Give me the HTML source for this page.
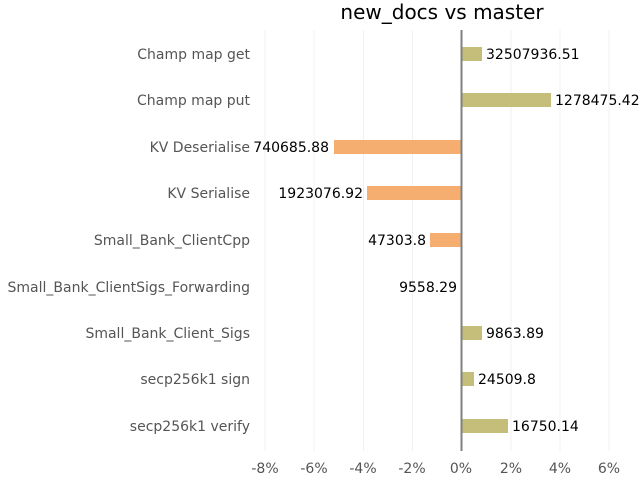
<html><body style="margin:0;background:#fff">
<svg width="640" height="480" xmlns="http://www.w3.org/2000/svg" font-family="DejaVu Sans, sans-serif">
<g stroke="#f0f0f0" stroke-width="1">
<line x1="265" y1="30" x2="265" y2="451"/><line x1="314" y1="30" x2="314" y2="451"/><line x1="363.5" y1="30" x2="363.5" y2="451"/><line x1="412.5" y1="30" x2="412.5" y2="451"/><line x1="511" y1="30" x2="511" y2="451"/><line x1="560" y1="30" x2="560" y2="451"/><line x1="609" y1="30" x2="609" y2="451"/>
</g>
<g fill="#c4be7a">
<rect x="462" y="47" width="20" height="14"/>
<rect x="462" y="93" width="89" height="14"/>
<rect x="462" y="326" width="20" height="14"/>
<rect x="462" y="372" width="12" height="14"/>
<rect x="462" y="419" width="46" height="14"/>
</g>
<g fill="#f5ae70">
<rect x="334" y="140" width="128" height="14"/>
<rect x="367" y="186" width="95" height="14"/>
<rect x="430" y="233" width="32" height="14"/>
</g>
<line x1="461.5" y1="30" x2="461.5" y2="451" stroke="#808080" stroke-width="2"/>
<text x="442" y="19" font-size="20" text-anchor="middle">new_docs vs master</text>
<g font-size="14" fill="#555" text-anchor="end">
<text x="250" y="59">Champ map get</text>
<text x="250" y="105">Champ map put</text>
<text x="250" y="152">KV Deserialise</text>
<text x="250" y="198">KV Serialise</text>
<text x="250" y="245">Small_Bank_ClientCpp</text>
<text x="250" y="292">Small_Bank_ClientSigs_Forwarding</text>
<text x="250" y="338">Small_Bank_Client_Sigs</text>
<text x="250" y="384">secp256k1 sign</text>
<text x="250" y="431">secp256k1 verify</text>
</g>
<g font-size="14" fill="#000">
<text x="486" y="59">32507936.51</text>
<text x="555" y="105">1278475.42</text>
<text x="329" y="152" text-anchor="end">740685.88</text>
<text x="363" y="198" text-anchor="end">1923076.92</text>
<text x="426" y="245" text-anchor="end">47303.8</text>
<text x="457" y="292" text-anchor="end">9558.29</text>
<text x="486" y="338">9863.89</text>
<text x="478" y="384">24509.8</text>
<text x="512" y="431">16750.14</text>
</g>
<g font-size="14" fill="#555" text-anchor="middle">
<text x="265" y="473">-8%</text><text x="314" y="473">-6%</text><text x="363" y="473">-4%</text><text x="412" y="473">-2%</text><text x="461" y="473">0%</text><text x="511" y="473">2%</text><text x="560" y="473">4%</text><text x="609" y="473">6%</text>
</g>
</svg>
</body></html>
